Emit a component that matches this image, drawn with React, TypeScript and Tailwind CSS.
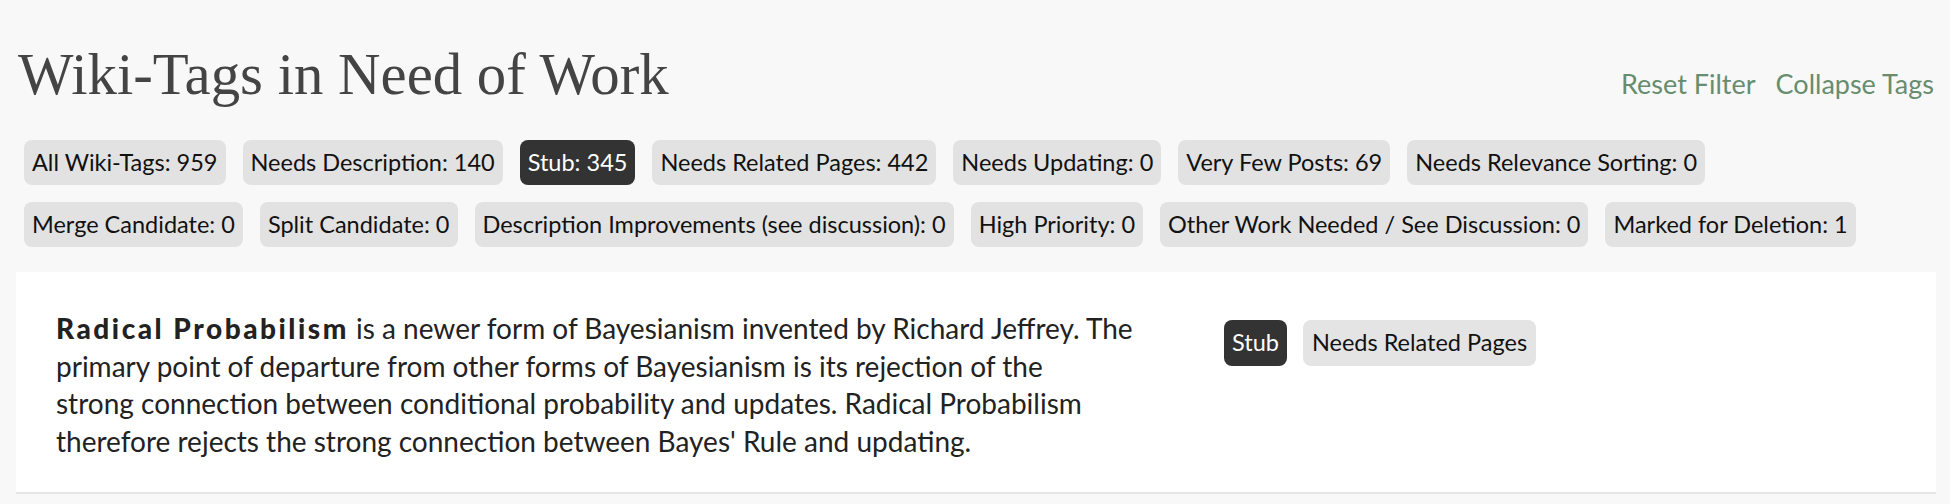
import React from 'react';

const filters = [
  [
    { label: 'All Wiki-Tags', count: 959 },
    { label: 'Needs Description', count: 140 },
    { label: 'Stub', count: 345, active: true },
    { label: 'Needs Related Pages', count: 442 },
    { label: 'Needs Updating', count: 0 },
    { label: 'Very Few Posts', count: 69 },
    { label: 'Needs Relevance Sorting', count: 0 },
  ],
  [
    { label: 'Merge Candidate', count: 0 },
    { label: 'Split Candidate', count: 0 },
    { label: 'Description Improvements (see discussion)', count: 0 },
    { label: 'High Priority', count: 0 },
    { label: 'Other Work Needed / See Discussion', count: 0 },
    { label: 'Marked for Deletion', count: 1 },
  ],
];

const sans = "font-['Lato','Open_Sans',sans-serif]";

function FilterChip({ label, count, active }: { label: string; count: number; active?: boolean }) {
  return (
    <div
      className={`h-[45px] px-2 flex items-center rounded-lg text-[23.5px] whitespace-nowrap ${
        active ? 'bg-[#333333] text-white' : 'bg-[#e2e2e2] text-[#111]'
      }`}
    >
      {label}: {count}
    </div>
  );
}

export default function App() {
  return (
    <div className={`min-h-[504px] bg-[#f8f8f8] ${sans}`}>
      <div className="w-[1920px] ml-4 pt-10">
        {/* Header */}
        <div className="flex items-baseline justify-between">
          <h1 className="font-['Liberation_Serif','Times_New_Roman',serif] text-[58.8px] leading-[70px] text-[#444] pl-[2px]">
            Wiki-Tags in Need of Work
          </h1>
          <div className="flex gap-5 text-[27px] text-[#678d6e] pr-[2px]">
            <span>Reset Filter</span>
            <span>Collapse Tags</span>
          </div>
        </div>

        {/* Filters */}
        <div className="mt-[30px] pl-2 flex flex-col gap-[17px]">
          {filters.map((row, i) => (
            <div key={i} className="flex gap-[17px]">
              {row.map((f) => (
                <FilterChip key={f.label} {...f} />
              ))}
            </div>
          ))}
        </div>

        {/* Tag card */}
        <div className="mt-[25px] bg-white border-b-2 border-[#e4e4e4] pl-10 pt-[38px] pb-[31px] flex">
          <p className="w-[1130px] text-[28px] leading-[37.7px] text-[#222] whitespace-nowrap">
            <span className="font-black tracking-[0.09em]">Radical Probabilism</span> is a newer form of
            Bayesianism invented by Richard Jeffrey. The
            <br />
            primary point of departure from other forms of Bayesianism is its rejection of the
            <br />
            strong connection between conditional probability and updates. Radical Probabilism
            <br />
            therefore rejects the strong connection between Bayes' Rule and updating.
          </p>
          <div className="ml-[38px] mt-[10px] flex gap-4 items-start text-[23.5px]">
            <span className="h-[46px] px-2 flex items-center rounded-lg bg-[#333333] text-white">Stub</span>
            <span className="h-[46px] px-[9px] flex items-center rounded-lg bg-[#e4e4e4] text-[#111]">
              Needs Related Pages
            </span>
          </div>
        </div>
      </div>
    </div>
  );
}
